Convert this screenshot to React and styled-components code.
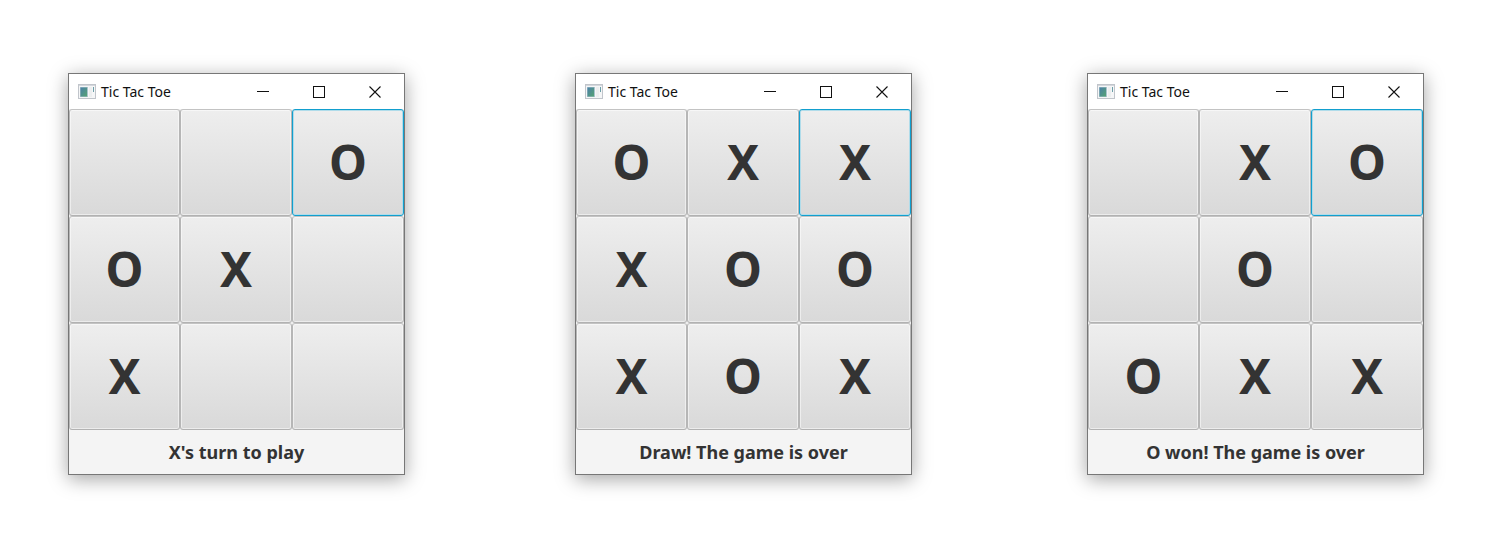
import React from "react";
import styled, { createGlobalStyle } from "styled-components";

const GlobalStyle = createGlobalStyle`
  * { box-sizing: border-box; }
  body {
    margin: 0;
    background: #fff;
    font-family: "Noto Sans", "Open Sans", sans-serif;
  }
`;

const Desktop = styled.main`
  display: grid;
  grid-template-columns: 507fr 512fr 420fr;
  min-height: 100vh;
  align-items: start;
  padding: 73px 0 48px 68px;
`;

const Window = styled.section`
  display: flex;
  flex-direction: column;
  width: 337px;
  border: 1px solid #777;
  background: #f4f4f4;
  box-shadow: 0 4px 18px rgba(0, 0, 0, 0.36);
`;

const TitleBar = styled.header`
  display: flex;
  align-items: center;
  height: 35px;
  padding: 0 1px 0 9px;
  background: #fff;
`;

const Title = styled.h1`
  flex: 1;
  margin: 0 0 0 5px;
  color: #111;
  font-size: 14px;
  font-weight: 400;
  line-height: 20px;
`;

const WindowButton = styled.button`
  display: flex;
  align-items: center;
  justify-content: center;
  width: 56px;
  height: 35px;
  padding: 0;
  border: 0;
  background: transparent;
  color: #111;
`;

const Board = styled.div`
  display: grid;
  grid-template-columns: 111fr 112fr 112fr;
`;

const Cell = styled.button`
  height: 107px;
  padding: 0 0 2px;
  border: 1px solid;
  border-color: ${(p) => (p.$focused ? "#129fce" : "#c3c3c3 #b6b6b6 #b2b2b2")};
  border-radius: 3px;
  background: linear-gradient(#eeeeee, #d9d9d9);
  box-shadow: inset 0 0 0 1px ${(p) => (p.$focused ? "#b0dcea" : "rgba(255, 255, 255, 0.5)")};
  color: #333;
  font-family: inherit;
  font-size: 48px;
  font-weight: 700;
  line-height: 64px;
  outline: none;
`;

const Status = styled.p`
  margin: 0;
  padding: 10px 8px;
  color: #333;
  font-size: 18px;
  font-weight: 700;
  line-height: 24px;
  text-align: center;
`;

const AppIcon = () => (
  <svg width="18" height="15" viewBox="0 0 18 15" aria-hidden="true">
    <defs>
      <linearGradient id="pane" x1="0" y1="0" x2="1" y2="1">
        <stop offset="0" stopColor="#4b7fa8" />
        <stop offset="1" stopColor="#55a373" />
      </linearGradient>
    </defs>
    <rect x="0.5" y="0.5" width="17" height="14" fill="#f5f6f7" stroke="#c1c5cb" />
    <path d="M1 1.5h16" stroke="#d4d7dc" />
    <rect x="2" y="3" width="8" height="10" fill="#a9c3cc" />
    <rect x="2.5" y="3.5" width="6.5" height="9" fill="url(#pane)" />
    <rect x="11" y="3" width="3" height="10" fill="#eceeef" />
    <path d="M15.5 3v5" stroke="#6c9fa8" />
  </svg>
);

const MinimizeIcon = () => (
  <svg width="12" height="12" viewBox="0 0 12 12" stroke="currentColor" aria-hidden="true">
    <path d="M0 5.5h12" />
  </svg>
);

const MaximizeIcon = () => (
  <svg width="12" height="12" viewBox="0 0 12 12" fill="none" stroke="currentColor" aria-hidden="true">
    <rect x="0.5" y="0.5" width="11" height="11" />
  </svg>
);

const CloseIcon = () => (
  <svg width="12" height="12" viewBox="0 0 12 12" stroke="currentColor" strokeWidth="1.1" aria-hidden="true">
    <path d="M0.5 0.5l11 11M11.5 0.5l-11 11" />
  </svg>
);

const games = [
  { cells: ["", "", "O", "O", "X", "", "X", "", ""], status: "X's turn to play" },
  { cells: ["O", "X", "X", "X", "O", "O", "X", "O", "X"], status: "Draw! The game is over" },
  { cells: ["", "X", "O", "", "O", "", "O", "X", "X"], status: "O won! The game is over" },
];

const FOCUSED_CELL = 2;

const GameWindow = ({ cells, status }) => (
  <Window>
    <TitleBar>
      <AppIcon />
      <Title>Tic Tac Toe</Title>
      <WindowButton type="button" aria-label="Minimize"><MinimizeIcon /></WindowButton>
      <WindowButton type="button" aria-label="Maximize"><MaximizeIcon /></WindowButton>
      <WindowButton type="button" aria-label="Close"><CloseIcon /></WindowButton>
    </TitleBar>
    <Board>
      {cells.map((mark, i) => (
        <Cell
          key={i}
          type="button"
          aria-label={mark ? undefined : `Empty square ${i + 1}`}
          $focused={i === FOCUSED_CELL}
        >
          {mark}
        </Cell>
      ))}
    </Board>
    <Status role="status">{status}</Status>
  </Window>
);

export default function App() {
  return (
    <>
      <GlobalStyle />
      <Desktop>
        {games.map((game) => (
          <GameWindow key={game.status} {...game} />
        ))}
      </Desktop>
    </>
  );
}
